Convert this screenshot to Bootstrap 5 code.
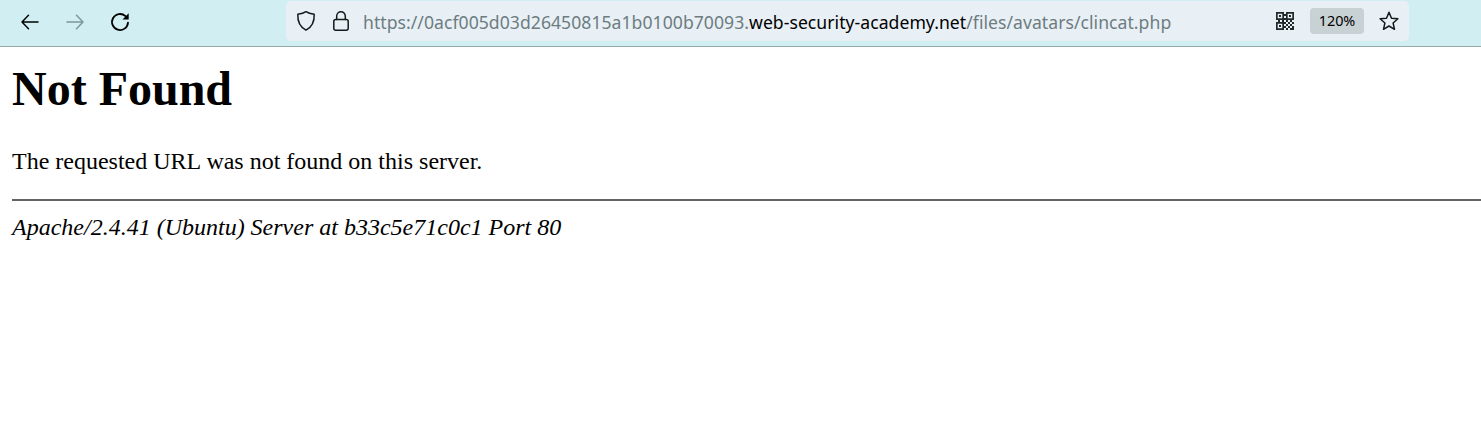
<!DOCTYPE html>
<html lang="en">
<head>
<meta charset="utf-8">
<title>404 Not Found</title>
<link href="https://cdn.jsdelivr.net/npm/bootstrap@5.3.0/dist/css/bootstrap.min.css" rel="stylesheet">
<style>
body{background:#fff;color:#000;overflow:hidden}
.toolbar{height:47px;background:#d1eff3;border-bottom:1px solid #95a9ac;padding-left:20px}
.toolbar svg{display:block;flex:none;fill:none;stroke:#15191a;stroke-width:1.5;stroke-linecap:round;stroke-linejoin:round}
.tools{width:266px;gap:25px;height:43px}
.tools svg{stroke:#000}
.tools .off{stroke:#7f9799}
.address{width:1123px;height:40px;margin-top:1px;background:#e8f0f6;border-radius:5px;padding:0 10px;font-family:"Noto Sans","Open Sans",sans-serif;font-size:17.600px;color:#6d7c7f}
.url{margin-left:13px;width:913px;line-height:40px;padding-top:1px;letter-spacing:.04px}
.url span{display:inline-block}
.host{color:#000}
.zoom-level{width:54px;height:26px;margin:0 15px 0 16px;background:#c8d1d4;border-radius:4px;color:#000;font-size:14.400px;line-height:26px}
.page{font-family:"Liberation Serif",serif;padding-left:12px;font-size:24px;line-height:28px}
.page h1{font-size:48px;font-weight:700;line-height:56px;margin:14px 0 30px}
.page p{margin:0}
.page hr{margin:24px 0 12px;border-top:2px solid #646464;opacity:1}
</style>
</head>
<body>
<header class="toolbar d-flex align-items-start">
  <nav class="tools d-flex align-items-center">
    <svg width="20" height="20" viewBox="0 0 20 20"><path d="M18 10H2M8.500 3.200 2 10l6.500 6.800"/></svg>
    <svg class="off" width="20" height="20" viewBox="0 0 20 20"><path d="M2 10h16M11.500 3.200 18 10l-6.500 6.800"/></svg>
    <svg width="20" height="20" viewBox="0 0 20 20"><path stroke-width="1.8" d="M18 10.600A8 8 0 1 1 15.500 4.200"/><path fill="#000" stroke="none" d="M18.700 1.200v6.300h-6.200z"/></svg>
  </nav>
  <div class="address d-flex align-items-center">
    <svg width="20" height="22" viewBox="0 0 20 22"><path d="M10 1.700C7.800 3.300 4.500 4 1.800 4.300 1.500 11 2.800 16.500 10 20.200 17.200 16.500 18.500 11 18.200 4.300 15.500 4 12.200 3.300 10 1.700z"/></svg>
    <svg class="ms-3" width="18" height="22" viewBox="0 0 18 22"><rect x="1.800" y="9.500" width="14.400" height="10.700" rx="2"/><path d="M4.700 9.500V6a4.300 4.300 0 0 1 8.600 0v3.500"/></svg>
    <div class="url flex-shrink-0 text-nowrap"><span class="prefix">https://0acf005d03d26450815a1b0100b70093.</span><span class="host">web-security-academy.net</span><span class="path">/files/avatars/clincat.php</span></div>
    <svg width="18" height="18" viewBox="0 0 18 18"><g stroke="none" fill="#23282a" fill-rule="evenodd"><path d="M0 0h8v8H0zM1.700 1.700v4.600h4.600V1.700zM3 3h2v2H3zM10 0h8v8h-8zM11.700 1.700v4.600h4.600V1.700zM13 3h2v2h-2zM0 10h8v8H0zM1.700 11.700v4.600h4.600v-4.600zM3 13h2v2H3z"/><path d="M8 2h2v2H8zM8 6h2v2H8zM2 8h2v2H2zM6 8h2v2H6zM10 8h2v2h-2zM14 8h2v2h-2zM8 10h2v2H8zM12 10h2v2h-2zM16 10h2v2h-2zM10 12h2v2h-2zM14 12h2v2h-2zM8 14h2v2H8zM12 14h2v2h-2zM16 14h2v4h-2zM10 16h2v2h-2zM14 16h2v2h-2z"/></g></svg>
    <div class="zoom-level flex-shrink-0 text-center">120%</div>
    <svg width="20" height="20" viewBox="0 0 20 20"><path d="m10 1.300 2.500 5.900 6.400.6-4.800 4.200 1.400 6.300-5.500-3.300-5.500 3.300 1.400-6.300-4.800-4.200 6.400-.6z"/></svg>
  </div>
</header>
<main class="page">
  <h1>Not Found</h1>
  <p>The requested URL was not found on this server.</p>
  <hr>
  <address class="fst-italic m-0">Apache/2.4.41 (Ubuntu) Server at b33c5e71c0c1 Port 80</address>
</main>
<script src="https://cdn.jsdelivr.net/npm/bootstrap@5.3.0/dist/js/bootstrap.bundle.min.js"></script>
</body>
</html>
